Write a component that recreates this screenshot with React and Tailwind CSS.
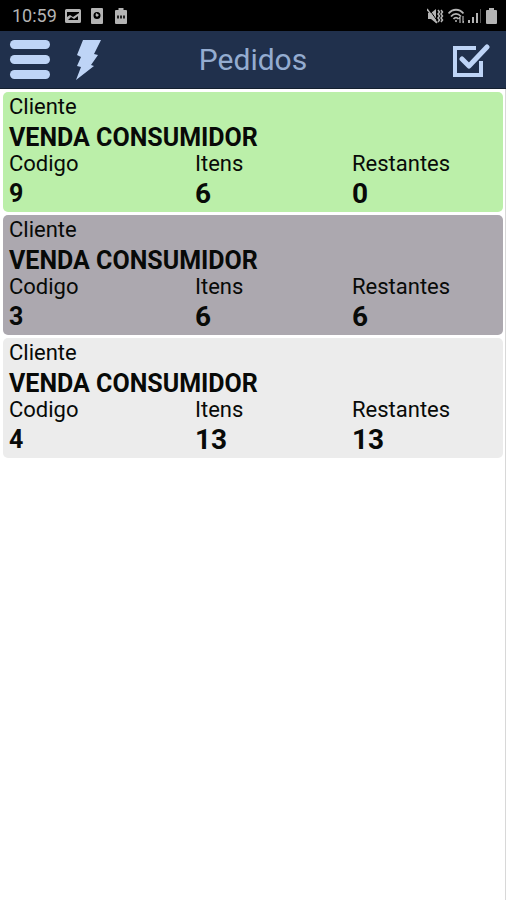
const orders = [
  { codigo: 9, cliente: "VENDA CONSUMIDOR", itens: 6, restantes: 0, color: "bg-[#bbefa9]" },
  { codigo: 3, cliente: "VENDA CONSUMIDOR", itens: 6, restantes: 6, color: "bg-[#aca8af]" },
  { codigo: 4, cliente: "VENDA CONSUMIDOR", itens: 13, restantes: 13, color: "bg-[#ececec]" },
];

function StatusBar() {
  return (
    <div className="flex h-[31px] items-center justify-between bg-black pl-3 pr-[9px] text-[#b4b4b4]">
      <div className="flex items-center gap-2">
        <span className="text-[18px] leading-5">10:59</span>
        <svg className="h-[14px] w-4" viewBox="0 0 16 14" fill="currentColor">
          <path fillRule="evenodd" d="M1.500 0h13A1.500 1.500 0 0 1 16 1.500v11a1.500 1.500 0 0 1-1.500 1.500h-13A1.500 1.500 0 0 1 0 12.500v-11A1.500 1.500 0 0 1 1.500 0ZM2 3v5l3-2 3 2 6-4V3Zm1 8h10V7L9 10 6 8Z" />
        </svg>
        <svg className="ml-[2px] h-4 w-3" viewBox="0 0 12 16" fill="currentColor">
          <path fillRule="evenodd" d="M1 0h10a1 1 0 0 1 1 1v14a1 1 0 0 1-1 1H1a1 1 0 0 1-1-1V1a1 1 0 0 1 1-1Zm5 4a3.500 3.500 0 1 0 0 7 3.500 3.500 0 0 0 0-7Z" />
          <path d="m5 5 3 2-2 2-1.500-1.500Z" />
        </svg>
        <svg className="ml-1 h-4 w-3" viewBox="0 0 12 16" fill="currentColor">
          <path d="M3.500 0h5v2H11a1 1 0 0 1 1 1v12a1 1 0 0 1-1 1H1a1 1 0 0 1-1-1V3a1 1 0 0 1 1-1h2.500Z" />
          <path d="M2 7.500h2v3H2zM5 7.500h2v3H5zM8 7.500h2v3H8z" fill="#222" />
        </svg>
      </div>
      <div className="flex items-center gap-1">
        <svg className="h-4 w-[17px]" viewBox="0 0 17 16" fill="none" stroke="currentColor">
          <path d="M1 5h3l5-4v14L4 11H1Z" fill="currentColor" stroke="none" />
          <path d="m2 1 9 13" stroke="#000" strokeWidth="1" />
          <path d="m0 1 10 14" strokeWidth="1.500" />
          <path d="m11 2 1.500 2L11 6l1.500 2L11 10l1.500 2L11 14M14 2l1.500 2L14 6l1.500 2L14 10l1.500 2L14 14" strokeWidth="1.500" />
        </svg>
        <svg className="h-4 w-4" viewBox="0 0 16 16" fill="none" stroke="currentColor" strokeWidth="1.800">
          <path d="M.5 5.500c4-5 11-5 15 0M3 8.500c3-3.500 7-3.500 10 0M5.500 11c1.500-1.800 3.500-1.800 5 0" />
          <circle cx="8" cy="13" r="1" fill="currentColor" stroke="none" />
          <path d="M12 15V9m-1.500 2L12 9M15 8v7m1-2-1 2" strokeWidth="1.200" />
        </svg>
        <svg className="h-4 w-[14px]" viewBox="0 0 14 16" fill="currentColor">
          <path d="M0 12h2v3H0zM4 9h2v6H4zM8 5h2v10H8z" />
          <path d="M12 1h1v14h-1z" fill="#555" />
        </svg>
        <svg className="h-4 w-[11px]" viewBox="0 0 11 16" fill="currentColor">
          <path d="M3 0h5v2h2a1 1 0 0 1 1 1v12a1 1 0 0 1-1 1H1a1 1 0 0 1-1-1V3a1 1 0 0 1 1-1h2Z" />
        </svg>
      </div>
    </div>
  );
}

function Header() {
  return (
    <header className="grid h-[58px] grid-cols-[1fr_auto_1fr] items-center border-b border-[#14202f] bg-[#20304c] px-[10px] text-[#bed4f6]">
      <div className="flex items-center gap-[26px]">
        <button type="button" aria-label="Menu" className="flex w-10 flex-col gap-[6px]">
          <span className="h-[9px] w-full rounded-full bg-current" />
          <span className="h-[9px] w-full rounded-full bg-current" />
          <span className="h-[9px] w-full rounded-full bg-current" />
        </button>
        <button type="button" aria-label="Sincronizar">
          <svg className="h-10 w-[26px]" viewBox="0 0 26 40" fill="currentColor">
            <path d="M7 0h18l-7 14 4 1-7 10 3 1L0 40l5-13-4-1 4-9-4-2Z" />
          </svg>
        </button>
      </div>
      <h1 className="text-[30px] leading-9 text-[#94acd0]">Pedidos</h1>
      <button type="button" aria-label="Confirmar" className="mr-[6px] justify-self-end">
        <svg className="h-9 w-[38px]" viewBox="0 0 38 36" fill="none" stroke="currentColor" strokeWidth="4">
          <path d="M24 6H3v27h26V19" />
          <path d="m10 17 7 7L35 5" strokeWidth="5" strokeLinecap="round" strokeLinejoin="round" />
        </svg>
      </button>
    </header>
  );
}

function OrderCard({ order }) {
  return (
    <li className={`rounded-[5px] px-[6px] ${order.color}`}>
      <p className="text-[22px] leading-[30px]">Cliente</p>
      <p className="text-[25px] leading-[31px] font-bold">{order.cliente}</p>
      <dl className="grid grid-cols-[186fr_157fr_145fr]">
        <div>
          <dt className="text-[22px] leading-[22px]">Codigo</dt>
          <dd className="text-[25px] leading-[37px] font-bold">{order.codigo}</dd>
        </div>
        <div>
          <dt className="text-[22px] leading-[22px]">Itens</dt>
          <dd className="text-[28px] leading-[37px] font-bold">{order.itens}</dd>
        </div>
        <div>
          <dt className="text-[22px] leading-[22px]">Restantes</dt>
          <dd className="text-[28px] leading-[37px] font-bold">{order.restantes}</dd>
        </div>
      </dl>
    </li>
  );
}

export default function App() {
  return (
    <div className="flex min-h-screen flex-col bg-white font-['Roboto',sans-serif] text-[#080a08]">
      <StatusBar />
      <Header />
      <main className="flex-1 border-r border-[#d8d8d8] pt-[3px] pr-[2px] pl-[3px]">
        <ul className="flex flex-col gap-[3px]">
          {orders.map((order) => (
            <OrderCard key={order.codigo} order={order} />
          ))}
        </ul>
      </main>
    </div>
  );
}
